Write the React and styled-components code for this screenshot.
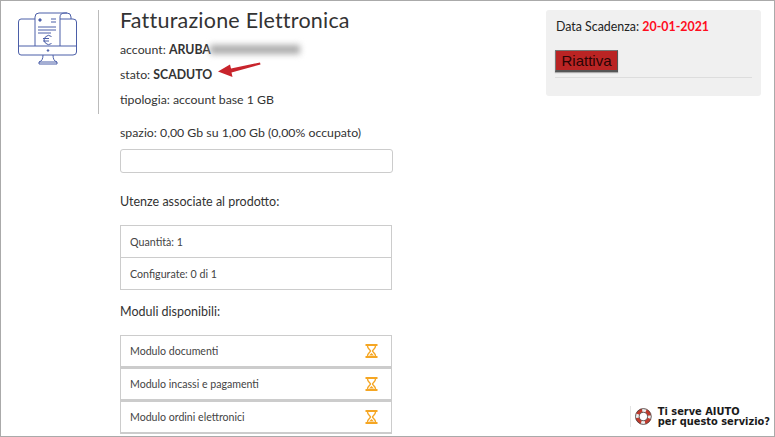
import React from "react";
import styled, { createGlobalStyle } from "styled-components";

const Global = createGlobalStyle`
  html, body { margin: 0; padding: 0; background: #fff; }
  body { font-family: Lato, "Open Sans", sans-serif; color: #333; }
`;
const Frame = styled.div`
  position: relative; box-sizing: border-box; width: 775px; height: 437px; overflow: hidden;
  border: 1px solid #aaa; background: #fff;
  display: flex; align-items: flex-start;
`;
const IconCol = styled.div`
  box-sizing: border-box; width: 98px; height: 104px; margin-top: 9px; border-right: 1px solid #bbb;
  padding: 2px 0 0 17px; flex: none;
`;
const Main = styled.div`
  width: 273px; margin-left: 21px; padding-top: 7px; flex: none;
`;
const Title = styled.h1`
  margin: 0 0 4px; font-size: 21.5px; line-height: 25px; font-weight: 400; color: #333; letter-spacing: .01em;
`;
const Line = styled.div`
  position: relative; font-size: 12.3px; line-height: 25px; height: 25px; color: #333; white-space: nowrap;
  b { font-weight: 700; }
`;
const Redacted = styled.span`
  position: absolute; left: 90px; top: 8px; width: 90px; height: 9px; background: #aaa; filter: blur(3px);
`;
const Arrow = styled.svg`
  position: absolute; left: 96px; top: -4px;
`;
const Space = styled.div`
  font-size: 12.3px; line-height: 18px; margin-top: 12px; white-space: nowrap;
`;
const Bar = styled.div`
  box-sizing: border-box; height: 24px; margin-top: 7px; border: 1px solid #ccc; border-radius: 3px; background: #fff;
`;
const Heading = styled.div`
  font-size: 12.5px; line-height: 18px; margin-top: ${p => p.$top}px; margin-bottom: ${p => p.$bottom}px;
`;
const Table = styled.div`
  box-sizing: border-box; width: 272px; border: 1px solid #ccc;
`;
const Row = styled.div`
  box-sizing: border-box; height: 32px; padding: 0 9px; display: flex; align-items: center;
  font-size: 10.7px; color: #444; border-top: 1px solid #ccc;
  &:first-child { border-top: none; height: 31px; }
`;
const ModuleBox = styled.div`
  box-sizing: border-box; width: 272px; height: 33px; padding: 0 13px 0 9px; border: 1px solid #ccc; border-bottom-width: 2px;
  display: flex; align-items: center; justify-content: space-between; font-size: 10.6px; color: #444;
`;
const Side = styled.aside`
  box-sizing: border-box; width: 215px; height: 86px; margin: 9px 0 0 153px; padding: 8px 9px 0 9px; background: #f0f0f0; border-radius: 3px; flex: none;
`;
const Expiry = styled.div`
  font-size: 12.4px; line-height: 18px; color: #222; padding-left: 1px; white-space: nowrap;
  b { color: #ff0d1e; font-weight: 700; }
`;
const Renew = styled.button`
  display: block; box-sizing: border-box; width: 63px; height: 22px; margin-top: 14px; padding: 0;
  background: #ba2424; color: #2a0505; border: 1px solid #777; border-bottom: 2px solid #555; border-right-color: #555;
  box-shadow: 0 1px 1px #aaa;
  font-family: "Liberation Sans", Arial, sans-serif; font-size: 15px; line-height: 18px;
`;
const Rule = styled.div`
  height: 1px; background: #ddd; margin-top: 5px; width: 197px;
`;
const Help = styled.div`
  position: absolute; right: 4px; bottom: 9px; width: 140px; height: 21px; display: flex; align-items: center;
  gap: 6px; padding-left: 4px; border-left: 1px solid #e4e4e4; box-sizing: border-box; background: #fff;
`;
const HelpText = styled.div`
  font-family: "DejaVu Sans", Verdana, sans-serif; font-weight: 700; font-size: 9.85px; line-height: 10px; color: #1a1a1a; white-space: nowrap;
`;

const MonitorIcon = () => (
  <svg width="62" height="56" viewBox="0 0 62 56" fill="none" stroke="#4b5ea8" strokeWidth="1">
    <path d="M17 7H3Q0.5 7 .5 10V40Q.5 43 3 43H55Q58.5 43 58.5 40V10Q58.5 7 55 7H53" />
    <path d="M.5 34H58.5" />
    <path d="M17 34V5Q17 1 21 1H49" />
    <path d="M42 34V5Q42 1 47 1H49Q53 1 53 5V7H42" />
    <path d="M33 7h5M33 10h5" />
    <circle cx="22" cy="8" r="1.2" fill="#4b5ea8" />
    <path d="M20 15H38M20 18H38M20 21H33" />
    <path d="M33.5 24.5a4.5 4.5 0 1 0 0 7M25 26.5h6M25 29h6" />
    <circle cx="30" cy="38.5" r=".8" fill="#4b5ea8" />
    <path d="M25 43Q25 49 21 50H39Q35 49 35 43M21 50V52H39V50" />
  </svg>
);

const RedArrow = () => (
  <Arrow width="46" height="20" viewBox="0 0 46 20">
    <path d="M44 4.5L15 10.5L14 6.5L2 13.5L16.5 19L15.5 14.5L44.5 6.5Z" fill="#c8242c" />
  </Arrow>
);

const Hourglass = () => (
  <svg width="13" height="14" viewBox="0 0 13 14" fill="none" stroke="#f5a623">
    <path d="M0.5 1H12.5M0.5 13H12.5" strokeWidth="2" />
    <path d="M2.5 2C2.5 5 5.5 6 5.5 7C5.5 8 2.5 9 2.5 12M10.5 2C10.5 5 7.5 6 7.5 7C7.5 8 10.5 9 10.5 12" strokeWidth="1.4" />
    <path d="M4 11.5L6.5 9L9 11.5Z" fill="#f5a623" stroke="none" />
  </svg>
);

const Lifebuoy = () => (
  <svg width="17" height="17" viewBox="0 0 17 17">
    <circle cx="8.5" cy="8.5" r="6.2" fill="none" stroke="#c23a2c" strokeWidth="3.8" />
    <circle cx="8.5" cy="8.5" r="6.2" fill="none" stroke="#eee" strokeWidth="3.8" strokeDasharray="4 5.74" strokeDashoffset="2" />
    <circle cx="8.5" cy="8.5" r="8" fill="none" stroke="#444" strokeWidth=".8" />
    <circle cx="8.5" cy="8.5" r="4.3" fill="none" stroke="#444" strokeWidth=".8" />
  </svg>
);

const modules = ["Modulo documenti", "Modulo incassi e pagamenti", "Modulo ordini elettronici"];

export default function App() {
  return (
    <Frame>
      <Global />
      <IconCol><MonitorIcon /></IconCol>
      <Main>
        <Title>Fatturazione Elettronica</Title>
        <Line>account: <b>ARUBA</b><Redacted /></Line>
        <Line>stato: <b>SCADUTO</b><RedArrow /></Line>
        <Line>tipologia: account base 1 GB</Line>
        <Space>spazio: 0,00 Gb su 1,00 Gb (0,00% occupato)</Space>
        <Bar />
        <Heading $top={20} $bottom={14}>Utenze associate al prodotto:</Heading>
        <Table>
          <Row>Quantità: 1</Row>
          <Row>Configurate: 0 di 1</Row>
        </Table>
        <Heading $top={13} $bottom={14}>Moduli disponibili:</Heading>
        {modules.map(m => (
          <ModuleBox key={m}>{m}<Hourglass /></ModuleBox>
        ))}
      </Main>
      <Side>
        <Expiry>Data Scadenza: <b>20-01-2021</b></Expiry>
        <Renew>Riattiva</Renew>
        <Rule />
      </Side>
      <Help>
        <Lifebuoy />
        <HelpText>Ti serve AIUTO<br />per questo servizio?</HelpText>
      </Help>
    </Frame>
  );
}
